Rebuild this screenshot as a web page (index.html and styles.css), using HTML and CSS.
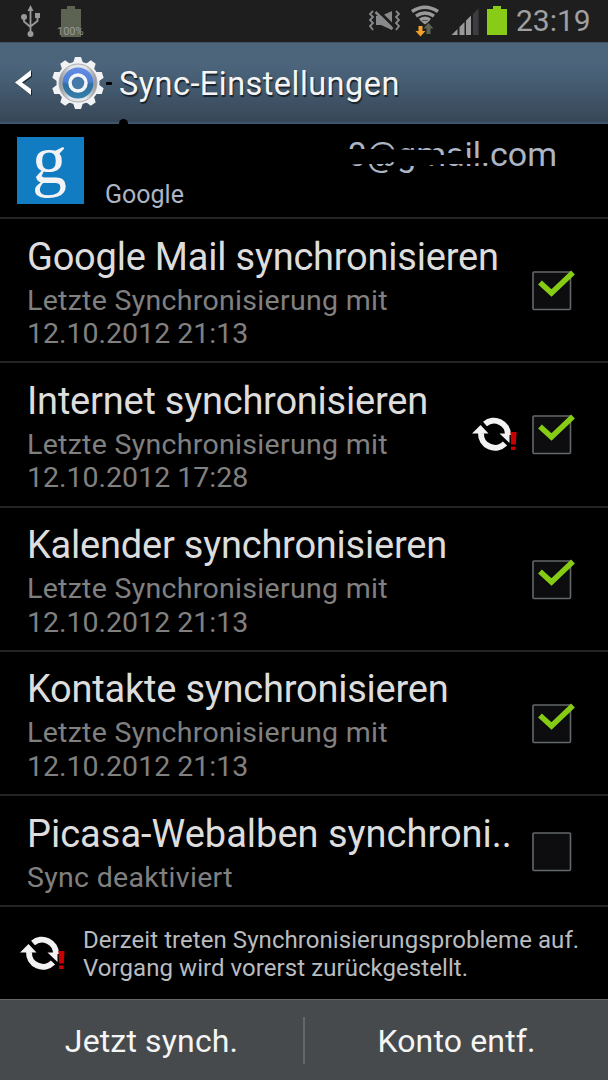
FILE: index.html
```html
<!DOCTYPE html>
<html lang="de">
<head>
  <meta charset="utf-8">
  <title>Sync-Einstellungen</title>
  <link rel="stylesheet" href="styles.css">
</head>
<body>
  <svg width="0" height="0" class="defs">
    <symbol id="sync-problem" viewBox="0 0 48 38">
      <g fill="none" stroke="#f2f2f2" stroke-width="6">
        <path d="M9 18A14 14 0 0 0 33 28.500"/>
        <path d="M13 9A14 14 0 0 1 36 20"/>
      </g>
      <path d="M0 18.500L8.500 10l8 8.500zM27.500 18.500L37.500 28V18.500z" fill="#f2f2f2"/>
      <path d="M38.500 17h6l-.700 12.500h-4.600zM39 31.500h4.500V35H39z" fill="#c80000"/>
    </symbol>
    <symbol id="check" viewBox="0 0 44 42">
      <rect x="1" y="3" width="37.500" height="37.500" rx="1" fill="#0d0d10" stroke="#63686a" stroke-width="1.600"/>
      <path d="M8 13.500L19.500 24 41 3.500" fill="none" stroke="#87cc14" stroke-width="5.500"/>
    </symbol>
    <symbol id="uncheck" viewBox="0 0 44 42">
      <rect x="1" y="3" width="37.500" height="37.500" rx="1" fill="#0d0d10" stroke="#63686a" stroke-width="1.600"/>
    </symbol>
  </svg>

  <div class="status-bar">
    <svg class="usb" width="24" height="36" viewBox="0 0 24 36">
      <path d="M10.500 32V8M4 16v4.500l6.500 5.500M17.500 15v5l-7 5.500" fill="none" stroke="#999" stroke-width="1.800"/>
      <path d="M7.500 10l3-6 3 6z"/>
      <circle cx="10.500" cy="33" r="3"/>
      <circle cx="4" cy="16" r="3"/>
      <rect x="15" y="12" width="5" height="5"/>
    </svg>
    <div class="charge">
      <svg width="22" height="32" viewBox="0 0 22 32"><path d="M1 3h6V0h8v3h6v28H1z" fill="#5c6352"/></svg>
      <span class="charge-label">100%</span>
    </div>
    <svg class="status-icons" width="148" height="42" viewBox="0 0 148 42">
      <path d="M5 11l-3 3 3 3-3 3 3 3-3 3 3 4M28 11l3 3-3 3 3 3-3 3 3 3-3 4" fill="none" stroke="#88898b" stroke-width="1.800"/>
      <path d="M8 16h5l11-5v19l-11-5H8z" fill="#88898b"/>
      <path d="M9 9.500l17 17" stroke="#1e1e1e" stroke-width="3"/>
      <path d="M7.500 12l17 17" stroke="#88898b" stroke-width="2.500"/>
      <g fill="none" stroke="#999" stroke-width="3.400">
        <path d="M44 11.500q13-8.500 26 0M48 16q9-6 18 0M52 20q5-3.500 10 0"/>
      </g>
      <path d="M53 21.500q4-2 8 0l-4 3z" fill="#999"/>
      <path d="M50.500 26h4v5h3l-5 5.500-5-5.500h3z" fill="#f5a02b"/>
      <path d="M58.500 34v-5.500h-3l5-5.500 5 5.500h-3V34z" fill="#5c6352"/>
      <path d="M83.500 35l6-6v6zM91.500 35v-8l5-5v13zM98 35V20.500l5-5V35z" fill="#999"/>
      <path d="M105 35V14l5.500-5.500V35z" fill="#3c3e42"/>
      <path d="M119 9h6V6h8v3h6v26h-20z" fill="#88cc18"/>
    </svg>
    <span class="clock">23:19</span>
  </div>

  <div class="title-bar">
    <svg class="back" width="18" height="28" viewBox="0 0 18 28">
      <path d="M16 1v6L7 13.500l9 6.500v6L0 13.500z" fill="#fff"/>
    </svg>
    <svg class="gear" width="56" height="56" viewBox="-28 -28 56 56">
      <defs>
        <linearGradient id="ring" x1="0" y1="0" x2="0" y2="1">
          <stop offset="0" stop-color="#668ce6"/>
          <stop offset="0.450" stop-color="#4b80d4"/>
          <stop offset="0.550" stop-color="#2f6f9e"/>
          <stop offset="1" stop-color="#357eac"/>
        </linearGradient>
        <linearGradient id="metal" x1="0" y1="0" x2="1" y2="0">
          <stop offset="0" stop-color="#8c9196"/>
          <stop offset="0.300" stop-color="#e4e6e8"/>
          <stop offset="0.700" stop-color="#e4e6e8"/>
          <stop offset="1" stop-color="#8c9196"/>
        </linearGradient>
      </defs>
      <g fill="#f1f2f3">
        <path id="tooth" d="M-5-20l2-6h6l2 6zM-5 20l2 6h6l2-6z"/>
        <use href="#tooth" transform="rotate(36)"/>
        <use href="#tooth" transform="rotate(72)"/>
        <use href="#tooth" transform="rotate(108)"/>
        <use href="#tooth" transform="rotate(144)"/>
      </g>
      <circle r="21.500" fill="#f1f2f3"/>
      <circle r="19" fill="url(#metal)" stroke="#a9adb1"/>
      <circle r="15.500" fill="url(#ring)"/>
      <circle r="8" fill="#4479aa" stroke="#f4f5f7" stroke-width="3.500"/>
    </svg>
    <h1>Sync-Einstellungen</h1>
    <span class="ink ink-dash"></span>
    <span class="ink ink-dot"></span>
  </div>

  <div class="account">
    <div class="logo">g</div>
    <div class="account-text">
      <div class="account-name">30@gmail.com
        <svg class="scribble" width="180" height="40" viewBox="0 0 180 40">
          <path d="M0 0H17V12H49L90 13H110L113 18H128L130 14H137L140 21H152L158 14H162L163 22L159 26H150L145 27H128L110 27L98 29H75L62 24L58 27H32L18 28V36H0z"/>
        </svg>
      </div>
      <div class="account-type">Google</div>
    </div>
  </div>

  <div class="item">
    <div class="item-text">
      <div class="item-title tight">Google Mail synchronisieren</div>
      <div class="item-info"><span class="wide">Letzte Synchronisierung mit</span><br>12.10.2012 21:13</div>
    </div>
    <svg class="box"><use href="#check"/></svg>
  </div>
  <div class="item">
    <div class="item-text">
      <div class="item-title tight">Internet synchronisieren</div>
      <div class="item-info"><span class="wide">Letzte Synchronisierung mit</span><br>12.10.2012 17:28</div>
    </div>
    <svg class="sync"><use href="#sync-problem"/></svg>
    <svg class="box"><use href="#check"/></svg>
  </div>
  <div class="item">
    <div class="item-text">
      <div class="item-title tight">Kalender synchronisieren</div>
      <div class="item-info"><span class="wide">Letzte Synchronisierung mit</span><br>12.10.2012 21:13</div>
    </div>
    <svg class="box"><use href="#check"/></svg>
  </div>
  <div class="item">
    <div class="item-text">
      <div class="item-title tight">Kontakte synchronisieren</div>
      <div class="item-info"><span class="wide">Letzte Synchronisierung mit</span><br>12.10.2012 21:13</div>
    </div>
    <svg class="box"><use href="#check"/></svg>
  </div>
  <div class="item item-short">
    <div class="item-text">
      <div class="item-title">Picasa-Webalben synchroni..</div>
      <div class="item-info wide">Sync deaktiviert</div>
    </div>
    <svg class="box"><use href="#uncheck"/></svg>
  </div>

  <div class="notice">
    <svg class="sync"><use href="#sync-problem"/></svg>
    <div>Derzeit treten Synchronisierungsprobleme auf.<br>Vorgang wird vorerst zurückgestellt.</div>
  </div>

  <div class="actions">
    <div class="action">Jetzt synch.</div>
    <div class="action">Konto entf.</div>
  </div>
</body>
</html>
```
FILE: styles.css
```css
* {
  box-sizing: border-box;
}

body {
  margin: 0;
  width: 608px;
  height: 1080px;
  overflow: hidden;
  display: flex;
  flex-direction: column;
  background: #000;
  color: #ddd;
  font-family: Roboto, sans-serif;
}

svg {
  flex: none;
}

.defs {
  position: absolute;
}

.status-bar {
  display: flex;
  flex: none;
  height: 42px;
  padding-left: 20px;
  background: #1e1e1e;
}

.usb {
  margin-top: 1px;
  fill: #999;
}

.charge {
  position: relative;
  width: 28px;
  margin: 6px 0 0 16px;
}

.charge-label {
  position: absolute;
  left: -3px;
  top: 19px;
  color: #999;
  font-size: 11px;
  line-height: 13px;
}

.status-icons {
  margin-left: 280px;
}

.clock {
  color: #a0a0a2;
  font-size: 30px;
  line-height: 42px;
}

.title-bar {
  position: relative;
  display: flex;
  flex: none;
  align-items: center;
  height: 82px;
  padding-left: 15px;
  background: linear-gradient(#4d6579, #4b647b 30%, #41566a 65%, #384757);
  border-top: 1px solid #3c5368;
  border-bottom: 2px solid #3d566b;
}

.back {
  filter: drop-shadow(1px 1px 0 #17222c);
}

.gear {
  margin-left: 17px;
}

h1 {
  margin: 3px 0 0 13px;
  color: #f5f5f5;
  font-size: 32.5px;
  font-weight: 400;
  letter-spacing: 0.450px;
  text-shadow: 1px 2px 1px #18222c;
}

.ink {
  position: absolute;
  background: #000;
}

.ink-dash {
  left: 106px;
  top: 39px;
  width: 6px;
  height: 3px;
  border-radius: 1px;
}

.ink-dot {
  left: 119px;
  top: 76px;
  width: 9px;
  height: 8px;
  border-radius: 5px 5px 0 0;
}

.account {
  display: flex;
  flex: none;
  height: 93px;
  padding: 13px 0 0 17px;
}

.logo {
  width: 67px;
  height: 67px;
  background: #117cc1;
  color: #f3f3f5;
  font-family: "Liberation Serif", serif;
  font-size: 70px;
  line-height: 45px;
  text-align: center;
  text-indent: -2px;
}

.account-text {
  flex: 1;
  padding-left: 21px;
  color: #acb5c5;
}

.account-name {
  position: relative;
  width: 452px;
  height: 43px;
  font-size: 34px;
  line-height: 35px;
  text-align: right;
}

.account-type {
  font-size: 25px;
  line-height: 29px;
}

/* pen strokes over the address */
.scribble {
  position: absolute;
  left: 223px;
  top: 0;
}

.item {
  display: flex;
  flex: none;
  align-items: center;
  height: 144.300px;
  padding: 0 32px 0 27px;
  border-top: 2px solid #242424;
}

.item-short {
  height: 111px;
}

.item-text {
  flex: 1;
  padding-top: 4px;
  white-space: nowrap;
}

.item-title {
  margin-bottom: 4px;
  font-size: 38px;
  line-height: 46px;
}

.tight {
  letter-spacing: -0.220px;
}

.item-info {
  color: #808080;
  font-size: 28.5px;
  line-height: 33.600px;
}

.wide {
  letter-spacing: 0.300px;
}

.box {
  width: 44px;
  height: 42px;
}

.sync {
  width: 48px;
  height: 38px;
  margin-right: 12px;
}

.notice {
  display: flex;
  flex: none;
  align-items: center;
  height: 94px;
  padding-left: 20px;
  border-top: 2px solid #242424;
  color: #b9bcbf;
  font-size: 24px;
  line-height: 28px;
  letter-spacing: 0.060px;
}

.notice > div {
  padding-top: 2px;
}

.notice .sync {
  margin-right: 15px;
}

.actions {
  display: flex;
  flex: 1;
  align-items: center;
  background: #464a4d;
  border-top: 1px solid #65686b;
}

.action {
  flex: 1;
  height: 47px;
  color: #f5f5f5;
  font-size: 32px;
  line-height: 48px;
  letter-spacing: 0.150px;
  text-align: center;
}

.action + .action {
  border-left: 2px solid #64686c;
}
```
